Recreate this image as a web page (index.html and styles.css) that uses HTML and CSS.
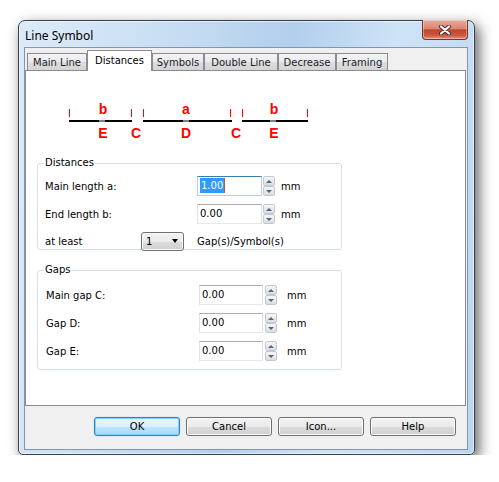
FILE: index.html
```html
<!DOCTYPE html>
<html lang="en">
<head>
    <meta charset="UTF-8">
    <title>Line Symbol</title>
    <link rel="stylesheet" href="styles.css">
</head>
<body>
    <div class="window">
        <div class="titlebar">
            <span class="title">Line Symbol</span>
            <button class="close" type="button">
                <svg width="14" height="10" viewBox="0 0 14 10">
                    <path d="M3 1.5 L11 8.5 M11 1.5 L3 8.5" stroke="#4a2a26" stroke-width="4" stroke-linecap="round"/>
                    <path d="M3 1.5 L11 8.5 M11 1.5 L3 8.5" stroke="#fff" stroke-width="2.2" stroke-linecap="round"/>
                </svg>
            </button>
        </div>
        <div class="client">
            <div class="tabs">
                <div class="tab t-main">Main Line</div>
                <div class="tab t-dist active">Distances</div>
                <div class="tab t-sym">Symbols</div>
                <div class="tab t-double">Double Line</div>
                <div class="tab t-dec">Decrease</div>
                <div class="tab t-frame">Framing</div>
            </div>
            <div class="panel">
                <!-- segment sketch: end part, main part, end part -->
                <svg class="diagram" width="330" height="85" viewBox="37 71 330 85">
                    <g fill="#000">
                        <rect x="69" y="120" width="63" height="2"/>
                        <rect x="143" y="120" width="89" height="2"/>
                        <rect x="242" y="120" width="66" height="2"/>
                    </g>
                    <g fill="#808080">
                        <rect x="99" y="120" width="6" height="2"/>
                        <rect x="183" y="120" width="6" height="2"/>
                        <rect x="270" y="120" width="6" height="2"/>
                    </g>
                    <g fill="#f00">
                        <rect x="69" y="109" width="1" height="8"/>
                        <rect x="131" y="109" width="1" height="8"/>
                        <rect x="143" y="109" width="1" height="8"/>
                        <rect x="230" y="109" width="1" height="8"/>
                        <rect x="242" y="109" width="1" height="8"/>
                        <rect x="307" y="109" width="1" height="8"/>
                    </g>
                    <g class="marks" fill="#f00" text-anchor="middle">
                        <text x="103" y="114">b</text>
                        <text x="186" y="114">a</text>
                        <text x="274" y="114">b</text>
                        <text x="103" y="138">E</text>
                        <text x="136" y="138">C</text>
                        <text x="186" y="138">D</text>
                        <text x="236" y="138">C</text>
                        <text x="274" y="138">E</text>
                    </g>
                </svg>

                <fieldset class="group distances">
                    <legend>Distances</legend>
                    <div class="row">
                        <label>Main length a:</label>
                        <div class="num focus"><span class="sel">1.00</span></div>
                        <span class="spin"><i class="up"></i><i class="down"></i></span>
                        <span class="unit">mm</span>
                    </div>
                    <div class="row">
                        <label>End length b:</label>
                        <div class="num">0.00</div>
                        <span class="spin"><i class="up"></i><i class="down"></i></span>
                        <span class="unit">mm</span>
                    </div>
                    <div class="row last">
                        <label class="short">at least</label>
                        <div class="combo">1<b></b></div>
                        <span class="note">Gap(s)/Symbol(s)</span>
                    </div>
                </fieldset>

                <fieldset class="group gaps">
                    <legend>Gaps</legend>
                    <div class="row">
                        <label>Main gap C:</label>
                        <div class="num">0.00</div>
                        <span class="spin"><i class="up"></i><i class="down"></i></span>
                        <span class="unit">mm</span>
                    </div>
                    <div class="row">
                        <label>Gap D:</label>
                        <div class="num">0.00</div>
                        <span class="spin"><i class="up"></i><i class="down"></i></span>
                        <span class="unit">mm</span>
                    </div>
                    <div class="row">
                        <label>Gap E:</label>
                        <div class="num">0.00</div>
                        <span class="spin"><i class="up"></i><i class="down"></i></span>
                        <span class="unit">mm</span>
                    </div>
                </fieldset>
            </div>
            <div class="buttons">
                <button class="btn default" type="button">OK</button>
                <button class="btn" type="button">Cancel</button>
                <button class="btn" type="button">Icon...</button>
                <button class="btn" type="button">Help</button>
            </div>
        </div>
    </div>
</body>
</html>
```

FILE: styles.css
```css
body { margin: 0; background: #fff; font: 10px "DejaVu Sans", sans-serif; color: #000; }

/* window frame */
.window { margin: 20px 0 0 18px; width: 457px; height: 435px; box-sizing: border-box; display: flex; flex-direction: column; padding: 0 6px 4px 5px; border: 1px solid #34404e; border-radius: 7px 7px 5px 5px; background: linear-gradient(100deg, #dcebf9 0%, #c9def3 28%, #b2cfed 52%, #cfe3f7 72%, #bbd5f0 100%); box-shadow: inset 0 0 0 1px rgba(255,255,255,.55), 4px 5px 14px rgba(0,0,0,.62); }
.titlebar { height: 26px; display: flex; align-items: center; justify-content: space-between; padding-left: 1px; }
.title { font: 12px "Noto Sans", sans-serif; color: #000; padding-top: 2px; }
.close { align-self: flex-start; margin-top: -1px; width: 46px; height: 20px; padding: 0; display: flex; align-items: center; justify-content: center; border: 1px solid #7a3428; border-top: none; border-radius: 0 0 4px 4px; background: linear-gradient(#eaaa9b 0%, #d98673 45%, #c4442c 52%, #c9573c 80%, #e3977f 100%); box-shadow: inset 0 0 0 1px rgba(255,255,255,.35); }

.client { flex: 1; display: flex; flex-direction: column; padding-top: 2px; border: 1px solid #8696a8; background: #f0f0f0; }

/* tabs */
.tabs { display: flex; align-items: flex-end; height: 20px; margin-left: 2px; }
.tab { height: 17px; box-sizing: border-box; border: 1px solid #898c95; border-bottom: none; display: flex; align-items: center; justify-content: center; color: #1a1a2e; background: linear-gradient(#f3f3f3 0%, #ebebeb 50%, #dedede 51%, #d4d4d4 100%); }
.tab.active { position: relative; height: 21px; margin-bottom: -1px; padding-bottom: 2px; background: #fff; color: #000; }
.t-main { width: 60px; }
.t-dist { width: 65px; }
.t-sym { width: 52px; }
.t-double { width: 74px; }
.t-dec { width: 58px; }
.t-frame { width: 52px; }

.panel { height: 336px; box-sizing: border-box; margin-right: 1px; padding-left: 11px; border: 1px solid #898c95; background: #fff; }
.diagram { display: block; }
.marks { font: bold 14px "Liberation Sans", sans-serif; }

/* group boxes */
.group { box-sizing: border-box; width: 305px; margin: 0; padding: 0 0 0 7px; border: 1px solid #d5dfe5; border-radius: 3px; }
.group legend { margin-left: -1px; padding: 0 1px; line-height: 14px; }
.distances { height: 94px; padding-top: 6px; }
.gaps { height: 107px; margin-top: 13px; padding-top: 8px; padding-left: 8px; }
.gaps legend { margin-left: -2px; }

.row { display: flex; align-items: center; height: 20px; margin-bottom: 8px; }
.row.last { margin-top: -1px; }
.row label { width: 152px; }
.gaps .row label { width: 153px; }
.row label.short { width: 96px; }

.num { width: 65px; height: 20px; box-sizing: border-box; padding-left: 2px; line-height: 18px; border: 1px solid; border-color: #abadb3 #dbdfe6 #e3e9ef #e2e3ea; }
.gaps .num { width: 64px; }
.num.focus { border-color: #3d7bad #b5cfe7 #b5cfe7 #b5cfe7; }
.sel { display: inline-block; line-height: 15px; padding: 0 1px; background: #3399ff; color: #fff; border-right: 1px solid #c2582b; }

.spin { display: flex; flex-direction: column; width: 12px; height: 20px; margin-left: 1px; }
.gaps .spin { margin-left: 2px; }
.spin i { flex: 1; display: flex; align-items: center; justify-content: center; box-sizing: border-box; border: 1px solid #c3c9d2; border-radius: 2px; background: linear-gradient(#f7f7f7, #dcdde0); }
.spin i::after { content: ""; border-left: 3px solid transparent; border-right: 3px solid transparent; }
.spin .up::after { border-bottom: 3px solid #56667e; }
.spin .down::after { border-top: 3px solid #56667e; }

.unit { margin-left: 6px; }
.gaps .unit { margin-left: 10px; }

.combo { width: 43px; height: 19px; box-sizing: border-box; display: flex; align-items: center; justify-content: space-between; padding: 0 5px 0 4px; border: 1px solid #707070; border-radius: 3px; background: linear-gradient(#f2f2f2 0%, #ebebeb 50%, #dddddd 51%, #cfcfcf 100%); box-shadow: inset 0 0 0 1px #fbfbfb; }
.combo b { border-left: 3.5px solid transparent; border-right: 3.5px solid transparent; border-top: 4px solid #000; }
.note { margin-left: 13px; }

/* dialog buttons */
.buttons { display: flex; justify-content: flex-end; gap: 6px; padding: 11px 11px 0 0; }
.btn { width: 86px; height: 19px; padding: 0; font: 10px "DejaVu Sans", sans-serif; color: #000; border: 1px solid #707070; border-radius: 3px; background: linear-gradient(#f2f2f2 0%, #ebebeb 50%, #dddddd 51%, #cfcfcf 100%); box-shadow: inset 0 0 0 1px #fcfcfc; }
.btn.default { border-color: #3c7fb1; background: linear-gradient(#eaf6fd 0%, #d9f0fc 50%, #bee6fd 51%, #a7d9f5 100%); box-shadow: inset 0 0 0 1px #7fd3fb, 0 0 1px #5ec4f7; }
```
